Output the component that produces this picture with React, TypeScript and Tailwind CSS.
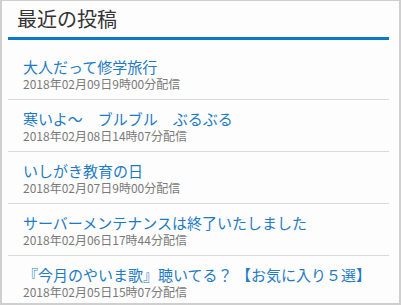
import React from "react";

const posts = [
  { title: "大人だって修学旅行", date: "2018年02月09日9時00分配信" },
  { title: "寒いよ～　ブルブル　ぶるぶる", date: "2018年02月08日14時07分配信" },
  { title: "いしがき教育の日", date: "2018年02月07日9時00分配信" },
  { title: "サーバーメンテナンスは終了いたしました", date: "2018年02月06日17時44分配信" },
  { title: "『今月のやいま歌』聴いてる？ 【お気に入り５選】", date: "2018年02月05日15時07分配信" },
];

export default function App() {
  return (
    <div
      className="w-[401px] h-[305px] overflow-hidden bg-[#fdfdfd] border-t border-b-2 border-x-2 border-[#cfcfcf] pl-[6px] pr-[10px]"
      style={{ fontFamily: '"Noto Sans CJK JP", "Noto Sans", sans-serif' }}
    >
      <div className="border-b-[3px] border-[#0a78c6] pt-[4px] pb-[4px] pl-[9px]">
        <h2 className="text-[20px] leading-[28px] text-[#333] font-normal">最近の投稿</h2>
      </div>
      <ul className="pt-[8px]">
        {posts.map((p, i) => (
          <li
            key={i}
            className={`pl-[15px] pt-[9px] pb-[7px] ${i < posts.length - 1 ? "border-b border-[#d9d9d9]" : ""}`}
          >
            <div className="text-[15px] leading-[19px] text-[#1f7bc5] whitespace-nowrap">{p.title}</div>
            <div className="text-[12px] leading-[16px] text-[#7a7a7a] whitespace-nowrap">{p.date}</div>
          </li>
        ))}
      </ul>
    </div>
  );
}
